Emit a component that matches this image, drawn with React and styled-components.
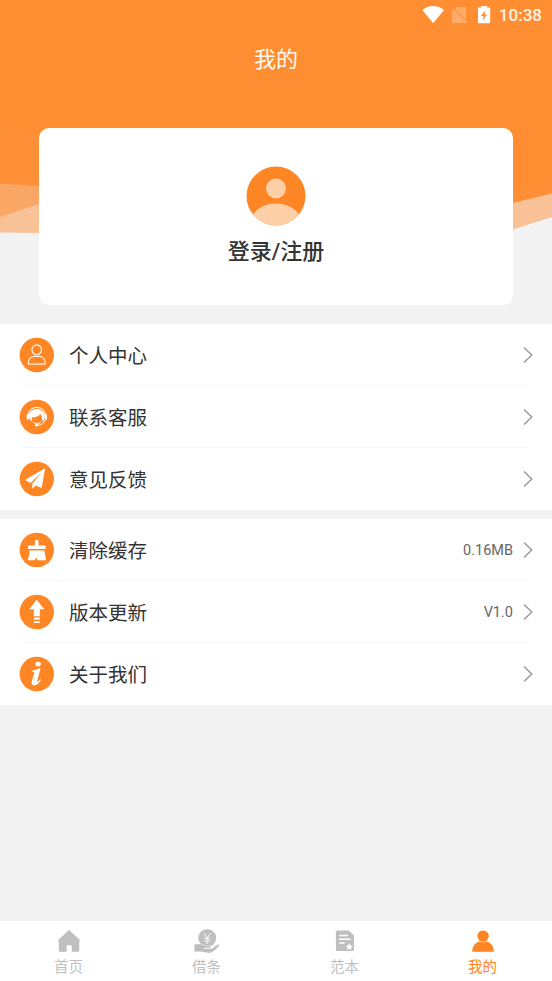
import React from "react";
import styled, { createGlobalStyle } from "styled-components";

const GlobalStyle = createGlobalStyle`
  * {
    box-sizing: border-box;
  }

  body {
    margin: 0;
    background-color: #f2f2f2;
    font-family: Roboto, "Noto Sans CJK SC", sans-serif;
  }
`;

const Page = styled.div`
  display: flex;
  flex-direction: column;
  width: 552px;
  height: 981px;
  background-color: #f2f2f2;
  overflow: hidden;
`;

const Header = styled.header`
  position: relative;
  height: 233px;
  flex-shrink: 0;
`;

const Waves = styled.svg`
  position: absolute;
  inset: 0;
  z-index: 0;
`;

const StatusBar = styled.div`
  position: relative;
  display: flex;
  justify-content: flex-end;
  align-items: center;
  height: 30px;
  padding-right: 10px;
  color: #fff4e6;
  font-size: 17px;
  font-weight: 500;
  line-height: 30px;

  & > svg {
    margin-right: 7px;
  }
`;

const Title = styled.h1`
  position: relative;
  margin: 0;
  color: #fff8ee;
  font-size: 22px;
  font-weight: 400;
  line-height: 60px;
  text-align: center;
`;

const LoginCard = styled.section`
  position: relative;
  display: flex;
  flex-direction: column;
  align-items: center;
  flex-shrink: 0;
  height: 177px;
  margin: -105.5px 39px 19.5px;
  padding-top: 38.5px;
  border-radius: 10px;
  background-color: #fff;

  & > h2 {
    margin: 9px 0 0;
    color: #333;
    font-size: 22px;
    font-weight: 500;
    line-height: 34px;
  }
`;

const Group = styled.ul`
  flex-shrink: 0;
  margin: 0 0 9px;
  padding: 0;
  list-style: none;
  background-color: #fff;
`;

const Row = styled.li`
  display: flex;
  align-items: center;
  height: 62px;
  padding: 0 19px;
  background: linear-gradient(#f8f8f8, #f8f8f8) 23px 100% / 506px 1px no-repeat;

  &:last-child {
    background: none;
  }
`;

const Label = styled.span`
  flex: 1;
  margin-left: 14px;
  padding-top: 3px;
  color: #333;
  font-size: 19.5px;
  line-height: 30px;
`;

const Value = styled.span`
  margin-right: 10px;
  color: #666;
  font-size: 14.5px;
`;

const TabBar = styled.nav`
  display: grid;
  grid-template-columns: repeat(4, 1fr);
  height: 60px;
  margin-top: auto;
  background-color: #fff;
`;

const Tab = styled.a`
  display: flex;
  flex-direction: column;
  align-items: center;
  padding-top: 6px;
  padding-right: 1px;
  color: ${(props) => (props.$active ? "#ff8422" : "#bfbfbf")};
  font-size: 14.5px;
  line-height: 22px;

  & > svg {
    margin-bottom: 2px;
  }
`;

const glyphs = {
  user: (
    <g fill="none" stroke="#fff2e2" strokeWidth="1.3">
      <circle cx="17.4" cy="12.3" r="4.8" />
      <path d="M9 25.8C9 21 12 18.8 15 18.8H20C23.3 18.8 26 21.4 26 25.8Q26 26.7 25.2 26.7H9.8Q9 26.7 9 25.8Z" />
    </g>
  ),
  service: (
    <>
      <path
        d="M8.7 16C9.2 11 12.8 8 17.5 8S25.8 11 26.3 16"
        fill="none"
        stroke="#fff"
        strokeWidth="1.2"
      />
      <path d="M9.7 16C10.3 11.9 13.4 9.6 17.5 9.6S24.8 12 25.3 16L24 21.4H22.9C22.9 18.9 22.4 16.6 21.3 14.4C18.5 17.2 15.3 17.9 12.7 17.8C12.1 19 12.3 20.6 12.7 22C10.7 21 9.8 19 9.7 16Z" />
      <rect x="7.3" y="14.6" width="2.6" height="5.6" rx="1.3" />
      <rect x="25.1" y="14.6" width="2.6" height="5.6" rx="1.3" />
      <path
        d="M26 20C25 23.6 22 25.7 18 25.9M13.6 22.3C15.6 24.6 19.2 24.7 21.5 22.4"
        fill="none"
        stroke="#fff"
        strokeWidth="1"
      />
      <ellipse cx="17.3" cy="25.8" rx="1.9" ry="1.2" />
    </>
  ),
  plane: (
    <path d="M25.8 6.7L5.5 18.6L11.2 21.5L22.3 10.8L13 22.3V27.3L16.4 24L22.4 26.4Z" />
  ),
  brush: (
    <>
      <path d="M15.6 12.9V9.3Q15.6 7.2 17.4 7.2T19.3 9.3V12.9H25Q26.2 12.9 26.2 14.1V16.6H8.7V14.1Q8.7 12.9 9.9 12.9Z" />
      <path d="M10 18H25L26.8 27.8H18.4L16.9 25.3L15.3 27.8H8.2C9.8 25 10.2 21.7 10 18Z" />
    </>
  ),
  upload: (
    <>
      <path d="M17.4 5.3L24.9 14.7H20.5V21.7H14.5V14.7H10.1Z" />
      <rect x="14.5" y="23" width="6" height="2.1" />
      <rect x="14.5" y="26.8" width="6" height="1.7" />
    </>
  ),
  info: (
    <>
      <ellipse cx="18.8" cy="7.6" rx="2.8" ry="2.3" />
      <path d="M12.6 14.2C15.4 13.9 17.8 13.2 20.4 11.6L21.2 12L18 24C17.7 25.4 18 25.8 18.8 25L21 22.8L21.7 23.5C19.7 26.7 17.1 29.1 14.5 28.8C12.3 28.6 12 26.5 12.6 24.5L14.9 16.8C15.2 15.6 14.6 15.4 12.5 15.3Z" />
    </>
  ),
};

const groups = [
  [
    { icon: "user", label: "个人中心" },
    { icon: "service", label: "联系客服" },
    { icon: "plane", label: "意见反馈" },
  ],
  [
    { icon: "brush", label: "清除缓存", value: "0.16MB" },
    { icon: "upload", label: "版本更新", value: "V1.0" },
    { icon: "info", label: "关于我们" },
  ],
];

const tabs = [
  {
    label: "首页",
    icon: (
      <path d="M14 3L25 13Q25.5 13.7 24.5 13.8H24.2V23.5Q24.2 24.8 23 24.8H16.8V19.2Q16.8 18.2 15.8 18.2H12.7Q11.7 18.2 11.7 19.2V24.8H5Q3.8 24.8 3.8 23.5V13.8H3.5Q2.5 13.7 3.2 13Z" />
    ),
  },
  {
    label: "借条",
    icon: (
      <>
        <circle cx="14.2" cy="11" r="9" />
        <path
          d="M10.8 6.2L14.2 10.8L17.6 6.2M14.2 10.8V16.8M11.2 11.3H17.2M11.2 13.9H17.2"
          fill="none"
          stroke="#fff"
          strokeWidth="1"
        />
        <path
          d="M1.9 17H7.1C10 16.7 11.3 18.7 13.8 18.9H17C18.3 19.1 18.1 20.8 16.8 21H11.5V21.6H18C20.9 21 22.5 17.8 25.4 17.3C26.5 17.3 26.7 18.2 26 19C23.6 21.9 20.8 24.8 17.8 25.8C14.7 26.8 11.2 24.9 7.3 24.8H1.9Q1.2 24.8 1.2 24V17.7Q1.2 17 1.9 17Z"
          stroke="#fff"
          strokeWidth=".4"
        />
      </>
    ),
  },
  {
    label: "范本",
    icon: (
      <>
        <path d="M6.4 3.5H17.8L23 8.5V22.4Q23 24 21.4 24H6.4Q4.9 24 4.9 22.4V5Q4.9 3.5 6.4 3.5Z" />
        <path
          d="M8.3 8.6H17M8.3 12.3H19.5M8.3 16H13.7"
          stroke="#fff"
          strokeWidth="1.5"
        />
        <path
          d="M18.3 16.3L19.4 18.4L21.8 18.8L20.1 20.5L20.5 22.8L18.3 21.7L16.1 22.8L16.5 20.5L14.8 18.8L17.2 18.4Z"
          fill="#fff"
        />
      </>
    ),
  },
  {
    label: "我的",
    active: true,
    icon: (
      <>
        <circle cx="14.1" cy="9.1" r="5.7" />
        <path d="M3.2 24.8C3.4 18.2 7.2 14.8 11.3 14.4Q14.1 16.1 17 14.4C21.4 15 24.7 18.6 25 24.8Z" />
      </>
    ),
  },
];

function StatusIcons() {
  return (
    <svg width="71" height="22" viewBox="421 4 71 22" fill="#fff">
      <path d="M422.4 10.1C428.8 4.5 437.5 4.5 444 10.1L433.2 23.2Z" />
      <path
        d="M457.2 7H466V19.9L455.2 9.1ZM452.8 8.2L467.4 22.8L466.5 23.7L465.6 22.9H452V11.4L453.6 10.8L451.9 9.1Z"
        opacity=".26"
      />
      <path d="M481 6H487V7.6H489Q490.2 7.6 490.2 8.8V22.1Q490.2 23.3 489 23.3H479.2Q478 23.3 478 22.1V8.8Q478 7.6 479.2 7.6H481Z" />
      <path d="M485.2 10.4L480.7 16H483.6L482.9 20.5L487.3 14.6H484.6Z" fill="#ff8e33" />
    </svg>
  );
}

function App() {
  return (
    <Page>
      <GlobalStyle />
      <Header>
        <Waves width="552" height="233" viewBox="0 0 552 233">
          <path
            d="M0 180H552V217L513 229.5L400 233H39L0 232.5Z"
            fill="#f9c196"
          />
          <path d="M0 180L39 184V204L0 217Z" fill="#faa765" />
          <path d="M0 0H552V193.5L513 203H39V186L0 183.7Z" fill="#ff9038" />
          <path d="M0 0H552V182L513 192V142L39 134L0 129Z" fill="#ff8e33" />
        </Waves>
        <StatusBar>
          <StatusIcons />
          <span>10:38</span>
        </StatusBar>
        <Title>我的</Title>
      </Header>
      <LoginCard>
        <svg width="60" height="60" viewBox="0 0 60 60">
          <clipPath id="avatar">
            <circle cx="30" cy="30" r="29.5" />
          </clipPath>
          <g clipPath="url(#avatar)">
            <rect width="60" height="60" fill="#ff8624" />
            <circle cx="30" cy="22.5" r="10" fill="#ffcfa7" />
            <ellipse cx="30" cy="57" rx="25.5" ry="19.5" fill="#ffcfa7" />
          </g>
        </svg>
        <h2>登录/注册</h2>
      </LoginCard>
      {groups.map((rows, i) => (
        <Group key={i}>
          {rows.map((row) => (
            <Row key={row.label}>
              <svg
                width="36"
                height="36"
                viewBox="-0.3 -0.5 36 36"
                fill="#fff"
              >
                <circle cx="17.5" cy="17.5" r="17.2" fill="#ff8624" />
                {glyphs[row.icon]}
              </svg>
              <Label>{row.label}</Label>
              {row.value && <Value>{row.value}</Value>}
              <svg width="10" height="18" viewBox="0 0 10 18">
                <path
                  d="M1 1.4L8.8 9L1 16.6"
                  fill="none"
                  stroke="#999"
                  strokeWidth="1.4"
                />
              </svg>
            </Row>
          ))}
        </Group>
      ))}
      <TabBar>
        {tabs.map((tab) => (
          <Tab key={tab.label} $active={tab.active}>
            <svg width="28" height="28" viewBox="0 0 28 28" fill="currentColor">
              {tab.icon}
            </svg>
            {tab.label}
          </Tab>
        ))}
      </TabBar>
    </Page>
  );
}

export default App;
